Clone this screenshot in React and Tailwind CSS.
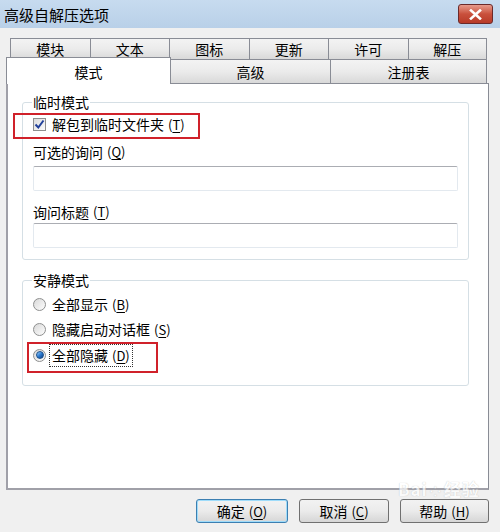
import React from 'react';

const font = { fontFamily: '"Microsoft YaHei", "Noto Sans CJK SC", "Liberation Sans", sans-serif' };

const Acc = ({ k }) => (
  <span className="ml-[4px] text-[13px]">
    (<span className="underline underline-offset-2">{k}</span>)
  </span>
);

const Tab = ({ label, className = '' }) => (
  <div
    className={`flex items-center justify-center border border-[#898c95] bg-gradient-to-b from-[#f3f3f3] via-[#ebebeb] to-[#d9d9d9] text-[14px] leading-none ${className}`}
  >
    {label}
  </div>
);

const Checkbox = () => (
  <span className="flex h-[13px] w-[13px] items-center justify-center border border-[#8e8f8f] bg-gradient-to-br from-[#dcdcdc] to-[#fbfbfb]">
    <svg width="11" height="11" viewBox="0 0 11 11">
      <path d="M1.5 5.5 L4.3 8.5 L9.5 1.5" fill="none" stroke="#21409a" strokeWidth="2" />
    </svg>
  </span>
);

const Radio = ({ checked }) => (
  <span className="flex h-[13px] w-[13px] items-center justify-center rounded-full border border-[#8e8f8f] bg-gradient-to-br from-[#d9d9d9] to-[#fdfdfd]">
    {checked && (
      <span className="h-[8px] w-[8px] rounded-full border border-[#1b4f8a] bg-gradient-to-br from-[#9fd4ff] via-[#2a7bd2] to-[#0c3d80]" />
    )}
  </span>
);

const Input = () => (
  <div className="h-[25px] w-full rounded-[2px] border border-[#e3e9ef] border-t-[#abadb3] bg-white" />
);

const Button = ({ children, primary }) => (
  <button
    className={`flex h-[24px] items-center justify-center rounded-[3px] border bg-gradient-to-b from-[#f2f2f2] via-[#ebebeb] to-[#d6d6d6] text-[14px] leading-none text-black ${
      primary ? 'border-[#3c7fb1] shadow-[inset_0_0_0_1px_#9fdcfa]' : 'border-[#707070]'
    }`}
  >
    {children}
  </button>
);

export default function App() {
  return (
    <div className="relative flex h-[532px] w-[500px] flex-col overflow-hidden bg-[#f0f0f0] text-black" style={font}>
      {/* title bar */}
      <div className="flex h-[28px] items-center justify-between bg-gradient-to-b from-[#c7dbef] to-[#b9d0e8] pl-[4px] pr-[7px]">
        <span className="text-[15px] leading-none">高级自解压选项</span>
        <div className="flex h-[20px] w-[35px] items-center justify-center rounded-[3px] border border-[#6b2a2a] bg-gradient-to-b from-[#e69a8c] via-[#c9503c] to-[#b83a28]">
          <svg width="13" height="11" viewBox="0 0 13 11">
            <path d="M2 1.5 L11 9.5 M11 1.5 L2 9.5" stroke="#fff" strokeWidth="2.6" strokeLinecap="square" />
          </svg>
        </div>
      </div>

      {/* tabs */}
      <div className="pt-[10px]">
        <div className="ml-[10px] grid h-[21px] w-[477px] grid-cols-6">
          <Tab label="模块" className="border-b-0 border-r-0" />
          <Tab label="文本" className="border-b-0 border-r-0" />
          <Tab label="图标" className="border-b-0 border-r-0" />
          <Tab label="更新" className="border-b-0 border-r-0" />
          <Tab label="许可" className="border-b-0 border-r-0" />
          <Tab label="解压" className="border-b-0" />
        </div>
        <div className="ml-[6px] grid h-[24px] w-[481px] grid-cols-[165px_159px_157px]">
          <div className="relative z-10 -mb-[1px] -mt-[2px] flex items-center justify-center border border-b-0 border-[#898c95] bg-white text-[14px] leading-none">
            <span className="mt-[2px]">模式</span>
          </div>
          <Tab label="高级" className="border-b-0 border-l-0 border-r-0" />
          <Tab label="注册表" className="border-b-0" />
        </div>
      </div>

      {/* panel */}
      <div className="ml-[6px] h-[407px] w-[483px] border border-[#898c95] border-b-[2px] border-l-[2px] border-b-[#a0a0a8] border-l-[#a0a0a8] bg-white text-[14px]">
        <fieldset className="ml-[14px] mt-[9px] w-[447px] rounded-[3px] border border-[#d5dfe5] px-[10px] pb-[11px]">
          <legend className="ml-[-1px] px-[1px] leading-[18px]">临时模式</legend>
          <div className="flex h-[20px] items-center gap-[6px] pt-[3px] box-content">
            <Checkbox />
            <span>
              解包到临时文件夹<Acc k="T" />
            </span>
          </div>
          <div className="mt-[8px] flex h-[20px] items-center">
            可选的询问<Acc k="Q" />
          </div>
          <div className="mt-[4px]">
            <Input />
          </div>
          <div className="mt-[11px] flex h-[20px] items-center">
            询问标题<Acc k="T" />
          </div>
          <div className="mt-[1px]">
            <Input />
          </div>
        </fieldset>

        <fieldset className="ml-[14px] mt-[11px] w-[447px] rounded-[3px] border border-[#d5dfe5] px-[10px] pb-[20px]">
          <legend className="ml-[-1px] px-[1px] leading-[18px]">安静模式</legend>
          <div className="mt-[5px] flex h-[20px] items-center gap-[6px]">
            <Radio />
            <span>
              全部显示<Acc k="B" />
            </span>
          </div>
          <div className="mt-[5px] flex h-[20px] items-center gap-[6px]">
            <Radio />
            <span>
              隐藏启动对话框<Acc k="S" />
            </span>
          </div>
          <div className="mt-[6px] flex h-[20px] items-center gap-[4px]">
            <Radio checked />
            <span className="px-[2px] outline outline-1 outline-dotted outline-[#333]">
              全部隐藏<Acc k="D" />
            </span>
          </div>
        </fieldset>
      </div>

      {/* buttons */}
      <div className="mt-[9px] flex justify-end gap-[11px] pr-[11px]">
        <Button primary>
          <span className="w-[90px]">
            确定<Acc k="O" />
          </span>
        </Button>
        <Button>
          <span className="w-[88px]">
            取消<Acc k="C" />
          </span>
        </Button>
        <Button>
          <span className="w-[87px]">
            帮助<Acc k="H" />
          </span>
        </Button>
      </div>

      {/* baidu watermark, faint, above the buttons */}
      <div className="pointer-events-none absolute left-[398px] top-[480px] text-[17px] font-bold leading-none tracking-[1px] text-white opacity-70 [text-shadow:0_0_1px_#a8a8a8]">
        Bai<span className="mx-[2px] text-[13px]">⁘</span>经验
      </div>

      {/* red annotation boxes */}
      <div className="pointer-events-none absolute left-[46px] top-[58px] h-[26px] w-[91px] border-2 border-[#d0212a]" />
      <div className="pointer-events-none absolute left-[13px] top-[113px] h-[26px] w-[187px] border-2 border-[#d0212a]" />
      <div className="pointer-events-none absolute left-[27px] top-[342px] h-[31px] w-[131px] border-2 border-[#d0212a]" />
    </div>
  );
}
